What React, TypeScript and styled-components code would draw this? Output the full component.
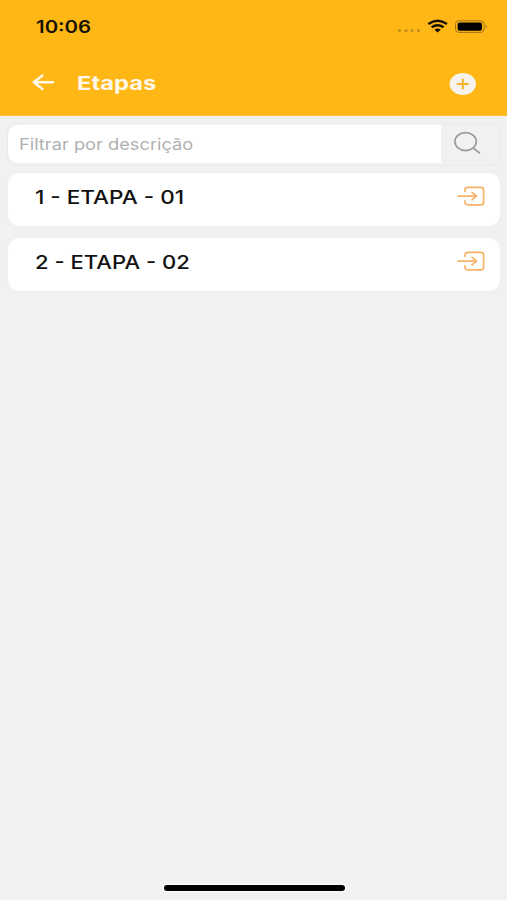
import React from "react";
import styled, { createGlobalStyle } from "styled-components";

const GlobalStyle = createGlobalStyle`
  * { box-sizing: border-box; }
  body { margin: 0; background: #f1f1f1; font-family: Inter, "Liberation Sans", sans-serif; }
`;

const Screen = styled.div`
  width: 507px;
  height: 900px;
  display: flex;
  flex-direction: column;
  background: #f1f1f1;
  overflow: hidden;
`;

const Header = styled.header`
  height: 116px;
  background: #ffb716;
  border-bottom: 1px solid #fbc042;
`;

const StatusBar = styled.div`
  height: 53px;
  padding: 0 19px 0 36px;
  display: flex;
  align-items: center;
  justify-content: space-between;
`;

const StatusIcons = styled.div`
  display: flex;
  align-items: center;
`;

const NavBar = styled.div`
  height: 60px;
  padding: 0 30px 0 32px;
  display: flex;
  align-items: center;
`;

const AddButton = styled.button`
  margin: 2px 0 0 auto;
  padding: 0;
  border: 0;
  background: none;
  display: flex;
`;

const Label = styled.span<{ $size: number; $weight: number; $color: string; $stretch: number }>`
  display: block;
  white-space: nowrap;
  font-size: ${(p) => p.$size}px;
  font-weight: ${(p) => p.$weight};
  color: ${(p) => p.$color};
  line-height: 24px;
  transform: scaleX(${(p) => p.$stretch});
  transform-origin: left center;
`;

const Title = styled.h1`
  margin: 1px 0 0 22px;
  font-size: inherit;
`;

const Content = styled.main`
  flex: 1;
  padding: 7px 6px 0 7px;
`;

const SearchBox = styled.div`
  height: 43px;
  display: flex;
  border: 1px solid #eaeaea;
  border-radius: 11px;
  background: #f1f1f1;
  overflow: hidden;
`;

const SearchField = styled.div`
  width: 433px;
  height: 39px;
  padding: 0 0 1px 11px;
  display: flex;
  align-items: center;
  background: #fff;
  border-top: 1px solid #f6f6f6;
  border-radius: 10px 0 0 10px;
`;

const SearchButton = styled.div`
  flex: 1;
  padding: 7px 0 0 12px;
`;

const List = styled.div`
  margin-top: 6px;
  display: flex;
  flex-direction: column;
  gap: 10px;
`;

const Card = styled.div`
  height: 55px;
  padding: 13px 15px 0 27px;
  display: flex;
  align-items: flex-start;
  justify-content: space-between;
  background: #fff;
  border: 1px solid #eeeeee;
  border-radius: 12px;
`;

const HomeArea = styled.footer`
  height: 18px;
  display: flex;
  justify-content: center;
  align-items: flex-start;
  padding-left: 1px;
`;

const HomeIndicator = styled.div`
  width: 181px;
  height: 6px;
  margin-top: 3px;
  border-radius: 3px;
  background: #000;
  box-shadow: 0 0 2px 1px #fff;
`;

const StatusGlyphs = () => (
  <svg width="92" height="20" viewBox="0 0 92 20">
    <g fill="#c78f1c">
      <circle cx="3.5" cy="13.6" r="1.7" />
      <circle cx="10" cy="13.6" r="1.7" />
      <circle cx="16.2" cy="13.6" r="1.7" />
      <circle cx="22.5" cy="13.6" r="1.7" />
    </g>
    <g fill="none" stroke="#171203" strokeWidth="2.5">
      <path d="M32.3 7.1 Q41.6 .5 50.9 7.1" />
      <path d="M35.6 10.3 Q41.6 6.1 47.6 10.3" />
    </g>
    <path d="M38.4 12.7 Q41.6 10.5 44.8 12.7 L41.6 15.6 Z" fill="#171203" />
    <rect x="59.5" y="3.8" width="28.6" height="11.6" rx="3.5" fill="none" stroke="#9d7518" />
    <rect x="61.6" y="5.4" width="24.4" height="8.4" rx="2" fill="#000" />
    <path d="M89.6 7.6 Q92 9.6 89.6 11.6 Z" fill="#9d7518" />
  </svg>
);

const BackArrow = () => (
  <svg width="23" height="18" viewBox="0 0 23 18" fill="none" stroke="#fff8ea" strokeWidth="2.5" strokeLinecap="round" strokeLinejoin="round">
    <path d="M21 8.3H2M10.4 1.6L1.8 8.3L10.4 15" />
  </svg>
);

const PlusCircle = () => (
  <svg width="28" height="24" viewBox="0 0 28 24">
    <ellipse cx="13.8" cy="12" rx="13.2" ry="11" fill="#f6f3ed" />
    <path d="M8.6 12H19M13.8 7.5V16.5" stroke="#f2b52b" strokeWidth="2" strokeLinecap="round" />
  </svg>
);

const SearchIcon = () => (
  <svg width="28" height="24" viewBox="0 0 28 24" fill="none" stroke="#9c9c9c" strokeWidth="1.7" strokeLinecap="round">
    <ellipse cx="12.6" cy="10.6" rx="10.7" ry="9" />
    <path d="M20 17L26.3 21.8" />
  </svg>
);

const EnterIcon = () => (
  <svg width="28" height="22" viewBox="0 0 28 22" fill="none" stroke="#f8b269" strokeWidth="1.7" strokeLinecap="round" strokeLinejoin="round">
    <path d="M8 5.4V4Q8 1.4 11 1.4H23.6Q26.6 1.4 26.6 4V16.4Q26.6 18.8 23.6 18.8H11Q8 18.8 8 16.4V14.8" />
    <path d="M1 10.1H19.4M15 6.4L19.6 10.1L15 13.8" />
  </svg>
);

const steps = [
  { id: 1, name: "ETAPA - 01", stretch: 1.185 },
  { id: 2, name: "ETAPA - 02", stretch: 1.16 },
];

export default function App() {
  return (
    <>
      <GlobalStyle />
      <Screen>
        <Header>
          <StatusBar>
            <Label $size={17} $weight={600} $color="#171203" $stretch={1.2}>10:06</Label>
            <StatusIcons><StatusGlyphs /></StatusIcons>
          </StatusBar>
          <NavBar>
            <BackArrow />
            <Title>
              <Label $size={19} $weight={700} $color="#fff8ea" $stretch={1.25}>Etapas</Label>
            </Title>
            <AddButton aria-label="Adicionar"><PlusCircle /></AddButton>
          </NavBar>
        </Header>
        <Content>
          <SearchBox>
            <SearchField>
              <Label $size={16} $weight={400} $color="#b0b0b0" $stretch={1.14}>Filtrar por descrição</Label>
            </SearchField>
            <SearchButton><SearchIcon /></SearchButton>
          </SearchBox>
          <List>
            {steps.map((step) => (
              <Card key={step.id}>
                <Label $size={19} $weight={500} $color="#111" $stretch={step.stretch}>{`${step.id} - ${step.name}`}</Label>
                <EnterIcon />
              </Card>
            ))}
          </List>
        </Content>
        <HomeArea><HomeIndicator /></HomeArea>
      </Screen>
    </>
  );
}
